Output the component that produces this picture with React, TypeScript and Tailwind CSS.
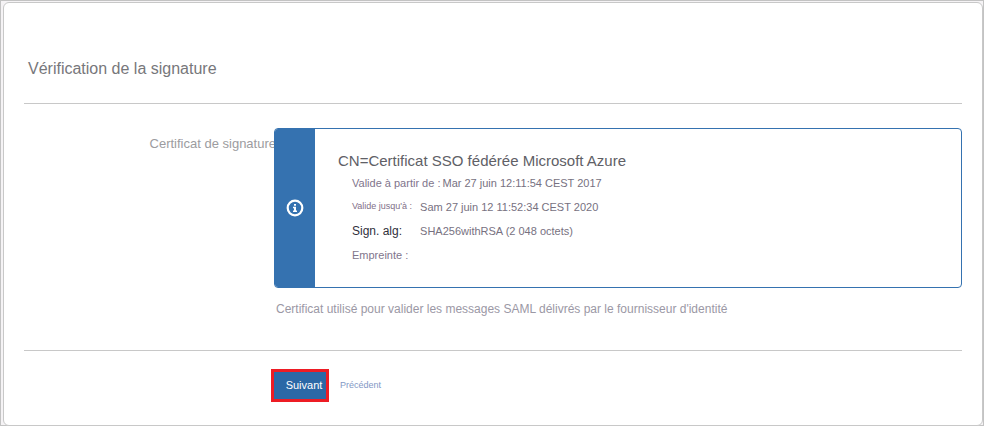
function InfoIcon() {
  return (
    <svg viewBox="0 0 18 18" className="h-[18px] w-[18px]" fill="none" aria-hidden="true">
      <circle cx="9" cy="9" r="7.3" stroke="#fff" strokeWidth="2.2" />
      <path d="M8 5h2v1.8H8zM7 7.8h3v3.7h1V13H7v-1.5h1V9.2H7z" fill="#fff" />
    </svg>
  );
}

const details = [
  { label: "Valide à partir de :", value: "Mar 27 juin 12:11:54 CEST 2017", labelStyle: "text-[11px] text-[#7f758c]", gap: "gap-[2px]" },
  { label: "Valide jusqu'à :", value: "Sam 27 juin 12 11:52:34 CEST 2020", labelStyle: "text-[9px] text-[#7f6f88]", gap: "gap-2" },
  { label: "Sign. alg:", value: "SHA256withRSA (2 048 octets)", labelStyle: "text-xs text-[#30303c]", gap: "gap-[18px]" },
  { label: "Empreinte :", value: "", labelStyle: "text-[11px] text-[#7f758c]", gap: "gap-2" },
];

export default function App() {
  return (
    <div className="border border-[#c3c3c3] bg-[#f5f3f5] pl-[2px] pt-px font-['Liberation_Sans',Arial,sans-serif]">
      <main className="-mb-px rounded-md border border-[#c8c8c8] bg-white px-5 pb-[23px]">
        <h1 className="flex h-[101px] items-end border-b border-[#c8c8c8] pb-[22px] pl-1 text-base text-[#77777b]">
          Vérification de la signature
        </h1>

        <section className="grid grid-cols-[250px_minmax(0,1fr)] border-b border-[#c8c8c8] pb-8 pt-6">
          <h2 className="-mr-[2px] pt-[6px] text-right text-[13px] leading-5 text-[#9c9ca0]">Certificat de signature</h2>
          <div>
            <div className="relative flex overflow-hidden rounded-[4px] border border-[#3572b0] bg-white">
              <div className="flex w-10 shrink-0 items-center justify-center bg-[#3572b0]">
                <InfoIcon />
              </div>
              <div className="min-w-0 grow pb-[20px] pl-[23px] pt-[22px]">
                <h3 className="text-[15px] leading-5 text-[#606066]">CN=Certificat SSO fédérée Microsoft Azure</h3>
                <dl className="pl-[14px]">
                  {details.map((d) => (
                    <div key={d.label} className={`flex h-6 items-center ${d.gap}`}>
                      <dt className={d.labelStyle}>{d.label}</dt>
                      <dd className="text-[11px] text-[#777181]">{d.value}</dd>
                    </div>
                  ))}
                </dl>
              </div>
            </div>
            <p className="pl-[2px] pt-3 text-xs leading-[18px] text-[#9b98a5]">
              Certificat utilisé pour valider les messages SAML délivrés par le fournisseur d'identité
            </p>
          </div>
        </section>

        <div className="flex items-center gap-[11px] pl-[247px] pt-[18px]">
          <button type="button" className="h-[33px] w-[58px] border-[3px] border-[#ed1c24] bg-[#2b68a6] pl-2 text-[11px] text-white">
            Suivant
          </button>
          <a href="#precedent" className="text-[9px] text-[#8398c5]">
            Précédent
          </a>
        </div>
      </main>
    </div>
  );
}
